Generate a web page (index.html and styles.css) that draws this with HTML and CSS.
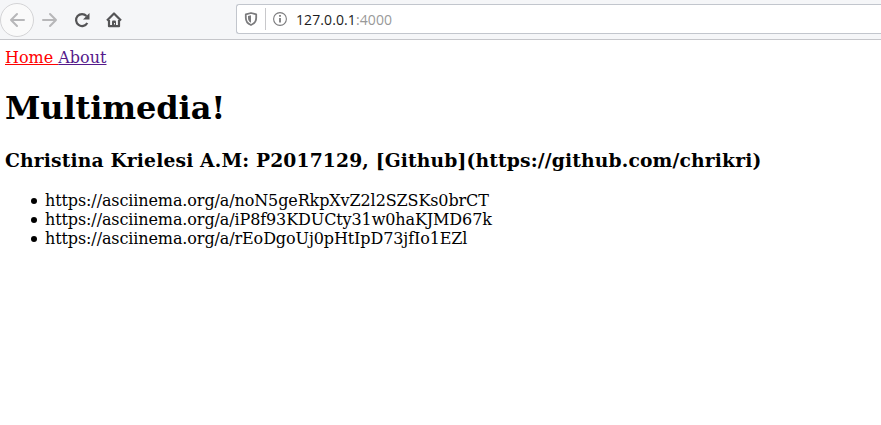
FILE: index.html
```html
<!DOCTYPE html>
<html lang="en">
<head>
<meta charset="utf-8">
<title>Multimedia</title>
<link rel="stylesheet" href="styles.css">
</head>
<body>
<header class="toolbar">
  <div class="buttons">
    <span class="back"><svg width="16" height="16" viewBox="0 0 16 16"><path d="M15 8H2M8 2L2 8l6 6"/></svg></span>
    <svg class="forward" width="16" height="16" viewBox="0 0 16 16"><path d="M1 8h13M8 2l6 6-6 6"/></svg>
    <svg class="reload" width="16" height="16" viewBox="0 0 16 16"><path d="M12.500 4A6 6 0 1 0 13.300 11"/><path class="solid" d="M15.500 1v6.500H9z"/></svg>
    <svg class="home" width="16" height="16" viewBox="0 0 16 16"><path d="M1 8.500L8 1.500l7 7M3 8v6.200h10V8"/><path class="solid" d="M6 15V9.500q0-1 1-1h2q1 0 1 1V15z"/><path class="knob" d="M8.500 11v1.500"/></svg>
  </div>
  <div class="address">
    <svg class="shield" width="14" height="14" viewBox="0 0 14 14"><path d="M7 1l5.200 1.300v3.500C12.200 9 10.200 11.800 7 13 3.800 11.800 1.800 9 1.800 5.800V2.300z"/><path class="half" d="M7 3.300L4 4v2c0 2 1 3.800 3 4.800z"/></svg>
    <span class="divider"></span>
    <svg class="info" width="14" height="14" viewBox="0 0 14 14"><circle cx="7" cy="7" r="6.400"/><path class="stem" d="M7 6v4.500M7 3v1.700"/></svg>
    <span class="url">127.0.0.1<span class="port">:4000</span></span>
  </div>
</header>
<main class="page">
  <nav><a class="current" href="#">Home </a><a class="visited" href="#">About</a></nav>
  <h1>Multimedia!</h1>
  <h3>Christina Krielesi A.M: P2017129, [Github](https://github.com/chrikri)</h3>
  <ul>
    <li>https://asciinema.org/a/noN5geRkpXvZ2l2SZSKs0brCT</li>
    <li>https://asciinema.org/a/iP8f93KDUCty31w0haKJMD67k</li>
    <li>https://asciinema.org/a/rEoDgoUj0pHtIpD73jfIo1EZl</li>
  </ul>
</main>
</body>
</html>
```
FILE: styles.css
```css
body { margin: 0; background: #fff; color: #000; font: 16px/19px "DejaVu Serif", serif; overflow: hidden; }
svg { fill: none; stroke: #545456; stroke-width: 2.2; stroke-linejoin: round; flex: none; }
.solid { fill: #545456; stroke: none; }
.toolbar { box-sizing: border-box; height: 40px; display: flex; background: #f5f6f8; border-bottom: 1px solid #c5c6ca; }
.buttons { width: 236px; flex: none; display: flex; align-items: center; gap: 16px; }
.back { box-sizing: border-box; width: 34px; height: 34px; border: 1px solid #d4d4d6; border-radius: 50%; background: #fafafa; display: flex; align-items: center; justify-content: center; margin-right: -8px; }
.back svg, .forward { stroke: #b7b7b9; stroke-width: 2; stroke-linecap: round; }
.knob { stroke: #f5f6f8; stroke-width: 1; }
.address { box-sizing: border-box; flex: 1; height: 30px; margin-top: 4px; padding-left: 7px; display: flex; align-items: center; background: #fff; border: 1px solid #c2c6cd; border-right: 0; border-radius: 3px 0 0 3px; }
.shield { stroke: #7b7b7d; stroke-width: 1.8; }
.half { fill: #7b7b7d; stroke: none; }
.divider { width: 1px; height: 22px; margin: 0 7px; background: #c8c8cb; }
.info { stroke: #7b7b7d; stroke-width: 1.1; }
.stem { stroke-width: 1.8; }
.url { margin-left: 9px; font: 14px/18px "Open Sans", sans-serif; letter-spacing: 0.1px; padding-top: 1px; color: #1c1c1d; }
.port { color: #999; }
.page { padding: 8px 5px; }
.current { color: #f00; }
.visited { color: #551a8b; }
h1 { font-size: 32px; line-height: 38px; margin: 22px 0 21px; letter-spacing: -0.1px; }
h3 { font-size: 18.72px; line-height: 22px; margin: 22px 0 20px; letter-spacing: 0.15px; }
ul { margin: 0; padding-left: 40px; list-style: none; letter-spacing: -0.11px; }
li { display: flex; align-items: center; }
li::before { content: ""; width: 6px; height: 6px; margin: 1px 8px 0 -14px; border-radius: 50%; background: #000; }
```
